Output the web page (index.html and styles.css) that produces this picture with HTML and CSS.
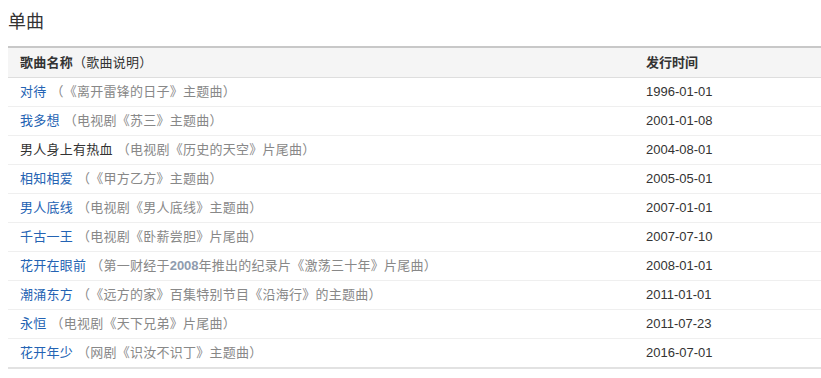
FILE: index.html
```html
<!DOCTYPE html>
<html lang="zh">
<head>
<meta charset="utf-8">
<title>单曲</title>
<link rel="stylesheet" href="styles.css">
</head>
<body>
<h2 class="title">单曲</h2>
<table class="songs">
  <thead>
    <tr><th class="c-name"><b>歌曲名称</b>（歌曲说明）</th><th class="c-date">发行时间</th></tr>
  </thead>
  <tbody>
    <tr><td class="name"><a class="song">对待</a> <span class="desc">（《离开雷锋的日子》主题曲）</span></td><td>1996-01-01</td></tr>
    <tr><td class="name"><a class="song">我多想</a> <span class="desc">（电视剧《苏三》主题曲）</span></td><td>2001-01-08</td></tr>
    <tr><td class="name"><span class="plain">男人身上有热血</span> <span class="desc">（电视剧《历史的天空》片尾曲）</span></td><td>2004-08-01</td></tr>
    <tr><td class="name"><a class="song">相知相爱</a> <span class="desc">（《甲方乙方》主题曲）</span></td><td>2005-05-01</td></tr>
    <tr><td class="name"><a class="song">男人底线</a> <span class="desc">（电视剧《男人底线》主题曲）</span></td><td>2007-01-01</td></tr>
    <tr><td class="name"><a class="song">千古一王</a> <span class="desc">（电视剧《卧薪尝胆》片尾曲）</span></td><td>2007-07-10</td></tr>
    <tr><td class="name"><a class="song">花开在眼前</a> <span class="desc">（第一财经于<span class="num">2008</span>年推出的纪录片《激荡三十年》片尾曲）</span></td><td>2008-01-01</td></tr>
    <tr><td class="name"><a class="song">潮涌东方</a> <span class="desc">（《远方的家》百集特别节目《沿海行》的主题曲）</span></td><td>2011-01-01</td></tr>
    <tr><td class="name"><a class="song">永恒</a> <span class="desc">（电视剧《天下兄弟》片尾曲）</span></td><td>2011-07-23</td></tr>
    <tr><td class="name"><a class="song">花开年少</a> <span class="desc">（网剧《识汝不识丁》主题曲）</span></td><td>2016-07-01</td></tr>
  </tbody>
</table>
</body>
</html>
```
FILE: styles.css
```css
html, body {
  margin: 0;
  padding: 0;
  background: #fff;
}
body {
  padding: 10px 0 0 8px;
  font-family: "Liberation Sans", Arial, "Noto Sans CJK SC", sans-serif;
  font-size: 13px;
  color: #333;
  text-spacing-trim: space-all;
}
.title {
  margin: 0 0 12px 0;
  font-size: 18px;
  line-height: 24px;
  font-weight: normal;
  color: #333;
}
.songs {
  width: 813px;
  border-collapse: collapse;
  border-top: 2px solid #c8c8c8;
  border-bottom: 2px solid #e2e2e2;
}
.songs th {
  background: #f5f5f5;
  text-align: left;
  font-weight: normal;
  height: 29px;
  line-height: 29px;
  padding: 0 12px;
  border-bottom: 1px solid #dedede;
  color: #333;
  white-space: nowrap;
}
.songs th.c-name {
  letter-spacing: 0.25px;
}
.songs th b {
  font-weight: bold;
}
.songs th.c-date {
  font-weight: bold;
  width: 163px;
}
.songs td {
  height: 28px;
  line-height: 28px;
  padding: 0 12px;
  border-bottom: 1px solid #efefef;
  white-space: nowrap;
  color: #333;
}
.songs td.name {
  letter-spacing: 0.25px;
}
.songs tbody tr:last-child td {
  border-bottom: none;
}
.song {
  color: #2463b3;
  text-decoration: none;
}
.plain {
  color: #333;
}
.desc {
  color: #888;
}
.num {
  color: #8f9cae;
  font-weight: bold;
  letter-spacing: 0;
}
```
